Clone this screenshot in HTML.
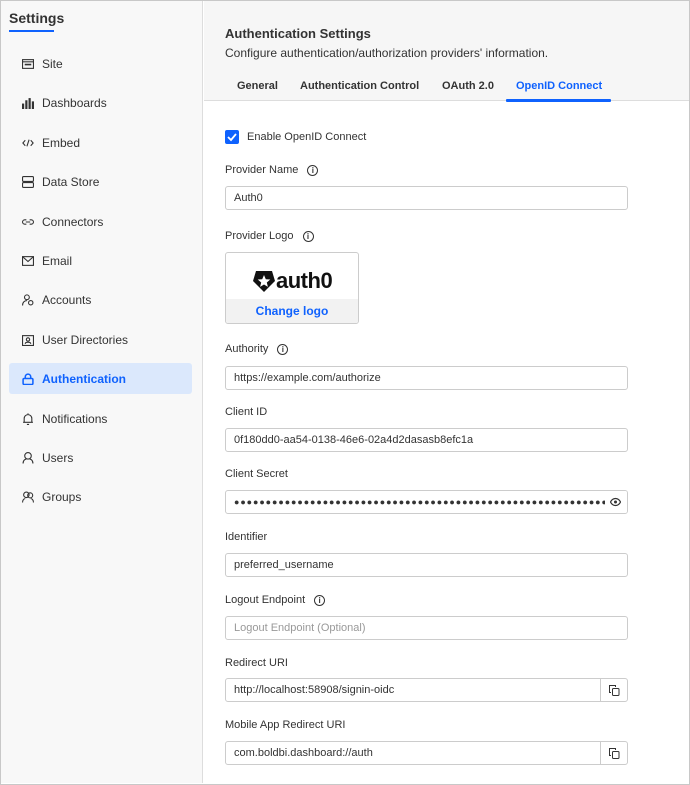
<!DOCTYPE html>
<html><head><style>
*{box-sizing:border-box;margin:0;padding:0}
body{width:690px;height:785px;font-family:"Liberation Sans",sans-serif;font-size:12px;color:#333;background:#fff;position:relative;overflow:hidden}
.frame{position:absolute;left:0;top:0;width:690px;height:785px;border:1px solid #c8c8c8;}
.side{position:absolute;left:1px;top:1px;width:202px;height:782px;background:#f8f8f8;border-right:1px solid #ddd}
.title{position:absolute;left:9px;top:10px;font-size:14px;font-weight:bold;color:#333}
.uline{position:absolute;left:9px;top:30px;width:45px;height:2px;background:#0f62fe}
.item{position:absolute;left:9px;width:183px;height:31px;display:flex;align-items:center;padding-left:13px;font-size:12px;color:#333;border-radius:3px}
.item svg{width:12px;height:12px;margin-right:8px;flex:none}
.item.act{background:#dbe8fc;color:#0f62fe}
.head{position:absolute;left:204px;top:1px;width:485px;height:100px;background:#f6f6f6;border-bottom:1px solid #ddd}
.h1{position:absolute;left:225px;top:26px;font-size:13px;font-weight:bold;color:#333}
.h2{position:absolute;left:225px;top:46px;font-size:12px;color:#333}
.tab{position:absolute;top:80px;font-size:11px;font-weight:bold;color:#333}
.lbl{position:absolute;left:225px;font-size:11px;color:#333;display:flex;align-items:center}
.info{display:inline-block;width:11px;height:11px;border:1px solid #333;border-radius:50%;margin-left:9px;font-size:8px;line-height:9px;text-align:center;font-weight:bold}
.inp{position:absolute;left:225px;width:403px;height:24px;border:1px solid #ccc;border-radius:3px;font-size:11px;line-height:22px;padding-left:8px;color:#333;background:#fff}
.cp{position:absolute;right:0;top:0;width:27px;height:22px;border-left:1px solid #ccc;display:flex;align-items:center;justify-content:center}
</style></head><body>
<div class="side"></div>
<div class="head"></div>
<div class="frame"></div>
<div class="title">Settings</div><div class="uline"></div>

<div class="item" style="top:48px"><svg viewBox="0 0 11 11" fill="none" stroke="#333"><rect x=".5" y="1.5" width="10" height="8"/><line x1="0" y1="3.5" x2="11" y2="3.5"/><path d="M2.5 6h6" stroke-width="1.5"/></svg>Site</div>
<div class="item" style="top:87px"><svg viewBox="0 0 11 11" fill="#333"><rect x="0" y="6" width="2" height="5"/><rect x="3" y="3" width="2" height="8"/><rect x="6" y="1" width="2" height="10"/><rect x="9" y="4" width="2" height="7"/></svg>Dashboards</div>
<div class="item" style="top:127px"><svg viewBox="0 0 11 11" fill="none" stroke="#333"><path d="M3 3L.8 5.5 3 8M8 3l2.2 2.5L8 8M6.5 2.5l-2 6"/></svg>Embed</div>
<div class="item" style="top:166px"><svg viewBox="0 0 11 11" fill="none" stroke="#333"><rect x=".5" y=".5" width="10" height="4.5" rx="1"/><rect x=".5" y="6" width="10" height="4.5" rx="1"/></svg>Data Store</div>
<div class="item" style="top:206px"><svg viewBox="0 0 11 11" fill="none" stroke="#333"><path d="M4 3.5H2.5a2 2 0 000 4H4M7 3.5h1.5a2 2 0 010 4H7M3.5 5.5h4"/></svg>Connectors</div>
<div class="item" style="top:245px"><svg viewBox="0 0 11 11" fill="none" stroke="#333"><rect x=".5" y="1.5" width="10" height="8"/><path d="M.5 1.5l5 4.5 5-4.5"/></svg>Email</div>
<div class="item" style="top:284px"><svg viewBox="0 0 11 11" fill="none" stroke="#333"><circle cx="4.5" cy="3" r="2.2"/><path d="M.5 10.5c0-3 2-4.5 4-4.5"/><circle cx="8" cy="8" r="2"/></svg>Accounts</div>
<div class="item" style="top:324px"><svg viewBox="0 0 11 11" fill="none" stroke="#333"><rect x=".5" y="1.5" width="10" height="9"/><circle cx="5.5" cy="5" r="1.5"/><path d="M3 9c0-2 5-2 5 0"/></svg>User Directories</div>
<div class="item act" style="top:363px"><svg viewBox="0 0 11 11" fill="none" stroke="#0f62fe" stroke-width="1.4"><rect x="1" y="5" width="9" height="5.5" rx="1"/><path d="M3 5V3.5a2.5 2.5 0 015 0V5"/></svg><span style="font-weight:bold">Authentication</span></div>
<div class="item" style="top:403px"><svg viewBox="0 0 11 11" fill="none" stroke="#333"><path d="M2 8.5V5a3.5 3.5 0 017 0v3.5h1H1M4.5 10.5h2M5.5 1V.3"/></svg>Notifications</div>
<div class="item" style="top:442px"><svg viewBox="0 0 11 11" fill="none" stroke="#333"><circle cx="5.5" cy="3.5" r="3"/><path d="M1 10.5c0-3 2-4 3-4M10 10.5c0-3-2-4-3-4"/></svg>Users</div>
<div class="item" style="top:481px"><svg viewBox="0 0 11 11" fill="none" stroke="#333"><circle cx="4" cy="3.5" r="2.5"/><circle cx="7.5" cy="4" r="2.3"/><path d="M.5 10.5c0-2.5 1.5-3.5 2.5-3.5M10.5 10.5c0-2.5-1.5-3.5-2.5-3.5"/></svg>Groups</div>

<div class="h1">Authentication Settings</div>
<div class="h2">Configure authentication/authorization providers' information.</div>
<div class="tab" style="left:237px">General</div>
<div class="tab" style="left:300px">Authentication Control</div>
<div class="tab" style="left:442px">OAuth 2.0</div>
<div class="tab" style="left:516px;color:#0f62fe">OpenID Connect</div>
<div style="position:absolute;left:506px;top:99px;width:105px;height:3px;background:#0f62fe;border-radius:1px"></div>

<div style="position:absolute;left:225px;top:130px;width:14px;height:14px;background:#0f62fe;border-radius:2px"><svg viewBox="0 0 14 14" width="14" height="14"><path d="M3 7l3 3 5-6" fill="none" stroke="#fff" stroke-width="1.8"/></svg></div>
<div class="lbl" style="top:131px;left:247px">Enable OpenID Connect</div>

<div class="lbl" style="top:164px">Provider Name<span class="info">i</span></div>
<div class="inp" style="top:186px">Auth0</div>
<div class="lbl" style="top:230px">Provider Logo<span class="info">i</span></div>
<div style="position:absolute;left:225px;top:252px;width:134px;height:72px;border:1px solid #ccc;border-radius:3px;background:#fff;overflow:hidden">
 <div style="position:absolute;left:27px;top:15px;display:flex;align-items:center">
  <svg width="22" height="23" viewBox="0 0 22 23"><path d="M3 1h16l3 10-11 11L0 11z" fill="#111"/><path d="M11 5l1.8 4.2 4.5.3-3.5 3 1.1 4.4L11 14.5 7.1 16.9l1.1-4.4-3.5-3 4.5-.3z" fill="#fff"/></svg>
  <span style="font-size:22px;font-weight:900;color:#111;letter-spacing:-0.5px;margin-left:1px">auth0</span>
 </div>
 <div style="position:absolute;left:0;top:46px;width:100%;height:26px;background:#f2f2f2;text-align:center;line-height:24px;color:#0f62fe;font-weight:bold;font-size:12px">Change logo</div>
</div>
<div class="lbl" style="top:343px">Authority<span class="info">i</span></div>
<div class="inp" style="top:366px">https://example.com/authorize</div>
<div class="lbl" style="top:406px">Client ID</div>
<div class="inp" style="top:428px">0f180dd0-aa54-0138-46e6-02a4d2dasasb8efc1a</div>
<div class="lbl" style="top:468px">Client Secret</div>
<div class="inp" style="top:490px;font-size:9px;letter-spacing:0.9px;overflow:hidden;white-space:nowrap">●●●●●●●●●●●●●●●●●●●●●●●●●●●●●●●●●●●●●●●●●●●●●●●●●●●●●●●●●●●<div style="position:absolute;right:0;top:0;width:22px;height:22px;background:#fff"></div><svg style="position:absolute;right:6px;top:6px" width="11" height="10" viewBox="0 0 11 10"><path d="M.5 5C2 2 4 1.5 5.5 1.5S9 2 10.5 5C9 8 7 8.5 5.5 8.5S2 8 .5 5z" fill="none" stroke="#333" stroke-width="1.2"/><circle cx="5.5" cy="5" r="1.5" fill="#333"/></svg></div>
<div class="lbl" style="top:531px">Identifier</div>
<div class="inp" style="top:553px">preferred_username</div>
<div class="lbl" style="top:594px">Logout Endpoint<span class="info">i</span></div>
<div class="inp" style="top:616px;color:#999">Logout Endpoint (Optional)</div>
<div class="lbl" style="top:657px">Redirect URI</div>
<div class="inp" style="top:678px">http://localhost:58908/signin-oidc<div class="cp"><svg width="12" height="12" viewBox="0 0 12 12" fill="none" stroke="#333"><path d="M3 8.5H1.5V1.5h6V3"/><rect x="4.5" y="4.5" width="6.5" height="7" rx="1"/></svg></div></div>
<div class="lbl" style="top:719px">Mobile App Redirect URI</div>
<div class="inp" style="top:741px">com.boldbi.dashboard://auth<div class="cp"><svg width="12" height="12" viewBox="0 0 12 12" fill="none" stroke="#333"><path d="M3 8.5H1.5V1.5h6V3"/><rect x="4.5" y="4.5" width="6.5" height="7" rx="1"/></svg></div></div>
</body></html>
